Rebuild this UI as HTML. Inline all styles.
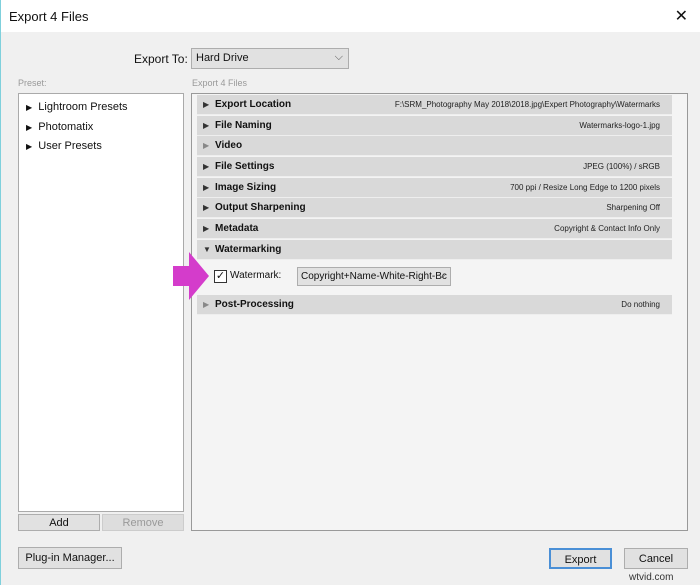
<!DOCTYPE html>
<html><head><style>
*{box-sizing:border-box;margin:0;padding:0}
body{width:700px;height:585px;background:#f0f0f0;font-family:"Liberation Sans",sans-serif;font-size:11px;color:#111;position:relative;overflow:hidden;border-left:1px solid #7fd0dc}
.abs{position:absolute}
.title{left:0;top:0;width:700px;height:32px;background:#fff;font-size:13px;padding:9px 8px}
.btn{position:absolute;background:#e1e1e1;border:1px solid #adadad;text-align:center;font-size:11px}
.row{position:absolute;left:196px;width:475px;height:20px;background:#d9d9d9;border-bottom:1px solid #eee;font-size:10px}
.row b{position:absolute;left:18px;top:4px;font-size:10px}
.row i{position:absolute;left:6px;top:5px;font-style:normal;font-size:8px;color:#333}
.row span{position:absolute;right:12px;top:5px;font-size:8px;color:#222}
</style></head><body>
<div class="abs title">Export 4 Files</div>
<div class="abs" style="right:12px;top:6px;font-size:16px">✕</div>
<div class="abs" style="left:133px;top:52px;font-size:12px">Export To:</div>
<div class="abs" style="left:190px;top:48px;width:158px;height:21px;background:#e1e1e1;border:1px solid #adadad;font-size:11px;padding:3px 4px">Hard Drive<span style="position:absolute;right:5px;top:2px;color:#555">⌵</span></div>
<div class="abs" style="left:17px;top:78px;font-size:9px;color:#999">Preset:</div>
<div class="abs" style="left:191px;top:78px;font-size:9px;color:#999">Export 4 Files</div>
<div class="abs" style="left:17px;top:93px;width:166px;height:419px;background:#fff;border:1px solid #aaa"></div>
<div class="abs" style="left:25px;top:98px;font-size:11px;line-height:18.5px"><span style="font-size:8px">▶</span>&nbsp; Lightroom Presets<br><span style="font-size:8px">▶</span>&nbsp; Photomatix<br><span style="font-size:8px">▶</span>&nbsp; User Presets</div>
<div class="btn" style="left:17px;top:514px;width:82px;height:17px;padding-top:2px">Add</div>
<div class="btn" style="left:101px;top:514px;width:82px;height:17px;padding-top:2px;color:#999;background:#ddd;border-color:#ccc">Remove</div>
<div class="abs" style="left:190px;top:93px;width:497px;height:438px;background:#f4f4f4;border:1px solid #999"></div>
<div class="row" style="top:95px"><i>▶</i><b>Export Location</b><span>F:\SRM_Photography May 2018\2018.jpg\Expert Photography\Watermarks</span></div>
<div class="row" style="top:116px"><i>▶</i><b>File Naming</b><span>Watermarks-logo-1.jpg</span></div>
<div class="row" style="top:136px"><i style="color:#888">▶</i><b>Video</b></div>
<div class="row" style="top:157px"><i>▶</i><b>File Settings</b><span>JPEG (100%) / sRGB</span></div>
<div class="row" style="top:178px"><i>▶</i><b>Image Sizing</b><span>700 ppi / Resize Long Edge to 1200 pixels</span></div>
<div class="row" style="top:198px"><i>▶</i><b>Output Sharpening</b><span>Sharpening Off</span></div>
<div class="row" style="top:219px"><i>▶</i><b>Metadata</b><span>Copyright &amp; Contact Info Only</span></div>
<div class="row" style="top:240px"><i>▼</i><b>Watermarking</b></div>
<div class="abs" style="left:213px;top:270px;width:13px;height:13px;border:1px solid #333;background:#fff;font-size:11px;line-height:11px;text-align:center">✓</div>
<div class="abs" style="left:229px;top:270px;font-size:10px">Watermark:</div>
<div class="abs" style="left:296px;top:267px;width:154px;height:19px;background:#e1e1e1;border:1px solid #adadad;font-size:10px;padding:3px 3px;white-space:nowrap;overflow:hidden">Copyright+Name-White-Right-Bc<span style="position:absolute;right:4px;top:2px;color:#555">⌵</span></div>
<svg class="abs" style="left:172px;top:252px" width="36" height="48"><polygon points="0,14 16,14 16,0 36,24 16,48 16,34 0,34" fill="#d43ccb"/></svg>
<div class="row" style="top:295px"><i style="color:#888">▶</i><b>Post-Processing</b><span>Do nothing</span></div>
<div class="btn" style="left:17px;top:547px;width:104px;height:22px;padding-top:4px">Plug-in Manager...</div>
<div class="btn" style="left:548px;top:548px;width:63px;height:21px;padding-top:4px;border:2px solid #4a8fd6">Export</div>
<div class="btn" style="left:623px;top:548px;width:64px;height:21px;padding-top:4px">Cancel</div>
<div class="abs" style="left:628px;top:572px;font-size:10px;color:#333">wtvid.com</div>
</body></html>
